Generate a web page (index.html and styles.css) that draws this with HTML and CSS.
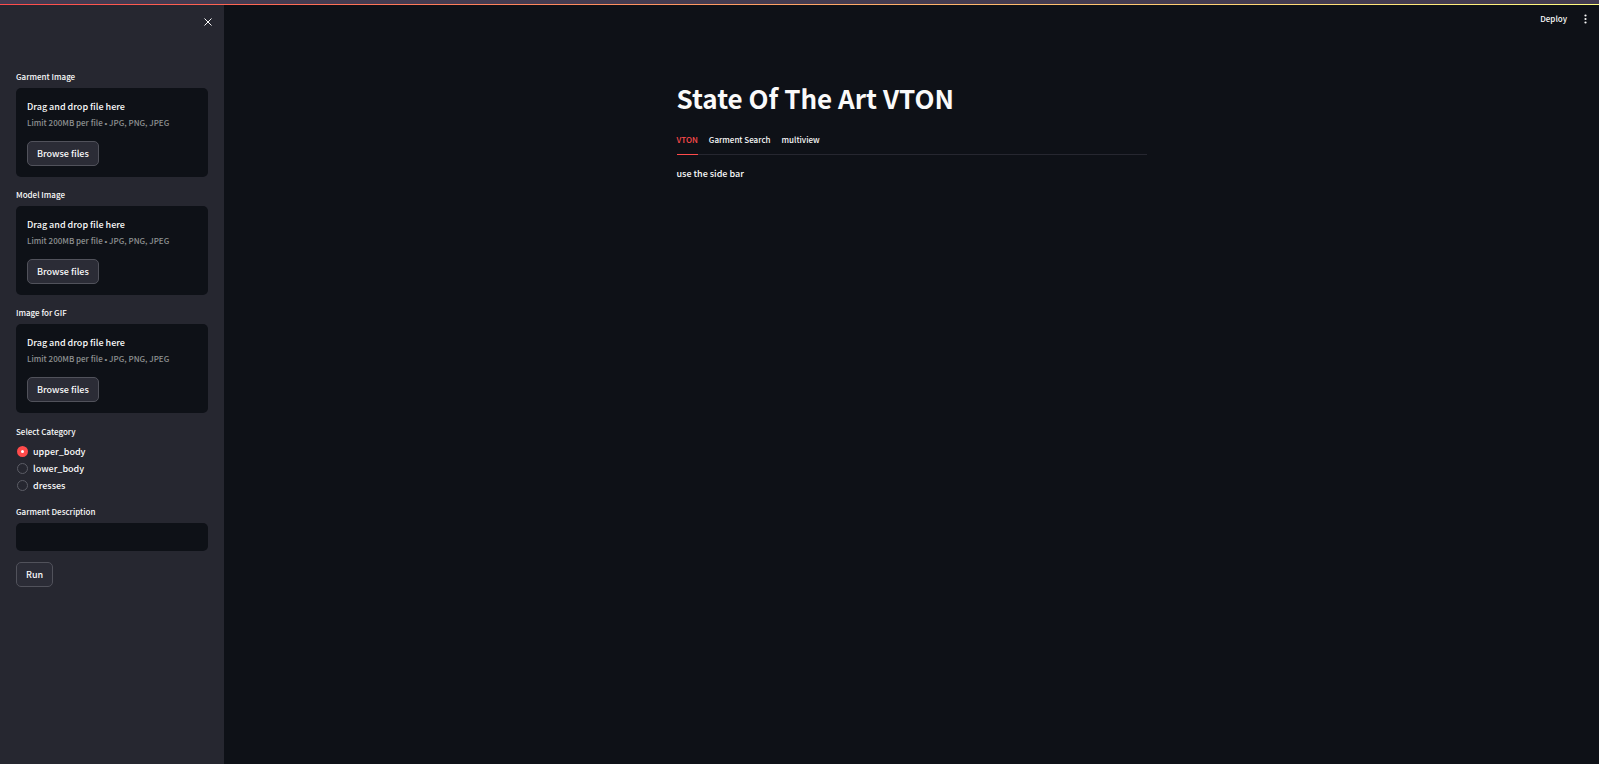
FILE: index.html
```html
<!DOCTYPE html>
<html lang="en">
<head>
<meta charset="utf-8">
<meta name="viewport" content="width=device-width, initial-scale=1">
<title>State Of The Art VTON</title>
<link rel="stylesheet" href="styles.css">
</head>
<body>
<div class="strip"></div>
<div class="rainbow"></div>
<div class="app">
  <aside class="sidebar">
    <div class="sidebar-head">
      <button class="close" type="button" aria-label="Close sidebar">
        <svg class="close-icon" viewBox="0 0 8 8" aria-hidden="true"><path d="M.5.5l7 7M7.5.5l-7 7"/></svg>
      </button>
    </div>
    <form class="controls">
      <section class="field">
        <label class="label" for="garment">Garment Image</label>
        <div class="dropzone">
          <div class="drop-title">Drag and drop file here</div>
          <div class="drop-hint">Limit 200MB per file <span class="bullet">•</span> JPG, PNG, JPEG</div>
          <button class="button" id="garment" type="button">Browse files</button>
        </div>
      </section>
      <section class="field">
        <label class="label" for="model">Model Image</label>
        <div class="dropzone">
          <div class="drop-title">Drag and drop file here</div>
          <div class="drop-hint">Limit 200MB per file <span class="bullet">•</span> JPG, PNG, JPEG</div>
          <button class="button" id="model" type="button">Browse files</button>
        </div>
      </section>
      <section class="field">
        <label class="label" for="gif">Image for GIF</label>
        <div class="dropzone">
          <div class="drop-title">Drag and drop file here</div>
          <div class="drop-hint">Limit 200MB per file <span class="bullet">•</span> JPG, PNG, JPEG</div>
          <button class="button" id="gif" type="button">Browse files</button>
        </div>
      </section>
      <section class="field category" role="radiogroup" aria-labelledby="category">
        <div class="label" id="category">Select Category</div>
        <div class="options">
          <label class="option"><input class="radio" type="radio" name="category" checked>upper_body</label>
          <label class="option"><input class="radio" type="radio" name="category">lower_body</label>
          <label class="option"><input class="radio" type="radio" name="category">dresses</label>
        </div>
      </section>
      <section class="field">
        <label class="label" for="description">Garment Description</label>
        <input class="text-input" id="description" type="text">
      </section>
      <button class="button run" type="button">Run</button>
    </form>
  </aside>
  <div class="page">
    <header class="toolbar">
      <button class="deploy" type="button">Deploy</button>
      <button class="menu" type="button" aria-label="Main menu">
        <svg class="menu-icon" viewBox="0 0 3 10" aria-hidden="true"><circle cx="1.5" cy="1.5" r="1.1"/><circle cx="1.5" cy="5" r="1.1"/><circle cx="1.5" cy="8.5" r="1.1"/></svg>
      </button>
    </header>
    <main class="content">
      <h1 class="title">State Of The Art VTON</h1>
      <div class="tabs" role="tablist">
        <button class="tab tab-active" type="button" role="tab" aria-selected="true">VTON</button>
        <button class="tab" type="button" role="tab" aria-selected="false">Garment Search</button>
        <button class="tab" type="button" role="tab" aria-selected="false">multiview</button>
      </div>
      <p class="text">use the side bar</p>
    </main>
  </div>
</div>
</body>
</html>
```

FILE: styles.css
```css
* {
  box-sizing: border-box;
}

body {
  margin: 0;
  min-height: 100vh;
  display: flex;
  flex-direction: column;
  background: #0e1117;
  color: #fafafa;
  font: 500 9px/16px "Noto Sans CJK SC", "Noto Sans", sans-serif;
}

button,
input {
  margin: 0;
  font: inherit;
  color: inherit;
}

button {
  padding: 0;
  border: 0;
  background: none;
}

.strip {
  height: 4px;
  background: #433b50;
}

.rainbow {
  height: 1px;
  background: linear-gradient(to right, #ff4b4b, #fffd80);
}

.app {
  flex: 1;
  display: flex;
}

.sidebar {
  width: 224px;
  padding: 0 16px;
  background: #262730;
}

.sidebar-head {
  height: 65px;
  padding: 9px 0;
  display: flex;
  justify-content: flex-end;
  align-items: flex-start;
}

.close {
  width: 16px;
  height: 16px;
  margin-right: -8px;
  display: grid;
  place-items: center;
}

.close-icon {
  width: 8px;
  height: 8px;
  fill: none;
  stroke: #fafafa;
}

.controls {
  display: flex;
  flex-direction: column;
  gap: 11px;
}

.field {
  display: flex;
  flex-direction: column;
  gap: 4px;
}

.category {
  padding-top: 1px;
}

.label,
.drop-hint,
.deploy,
.tab {
  font-size: 8px;
}

.label {
  line-height: 14px;
}

.dropzone {
  padding: 11px;
  border-radius: 5px;
  background: #0e1117;
}

.drop-hint {
  height: 16px;
  margin-bottom: 10px;
  color: #8f9193;
}

.bullet {
  font-family: "Liberation Sans", sans-serif;
}

.button {
  display: block;
  height: 25px;
  padding: 0 9px;
  border: 1px solid #51525b;
  border-radius: 5px;
  background: #2b2c36;
}

.run {
  align-self: flex-start;
}

.option {
  height: 17px;
  padding-left: 1px;
  display: flex;
  align-items: center;
  gap: 5px;
}

.radio {
  appearance: none;
  width: 11px;
  height: 11px;
  border: 1px solid #5c5d66;
  border-radius: 50%;
}

.radio:checked {
  border: 4px solid #ff4b4b;
  background: #fff;
}

.text-input {
  width: 100%;
  height: 28px;
  padding: 0 8px;
  border: 0;
  border-radius: 5px;
  background: #0e1117;
}

.page {
  flex: 1;
}

.toolbar {
  height: 28px;
  padding: 0 12px;
  display: flex;
  justify-content: flex-end;
  align-items: center;
  gap: 17px;
}

.menu {
  display: flex;
}

.menu-icon {
  width: 3px;
  height: 10px;
  fill: #fafafa;
}

.content {
  max-width: 470px;
  margin: 0 auto;
  padding-top: 47px;
}

.title {
  margin: 0 0 11px;
  font-size: 26px;
  line-height: 36px;
  font-weight: 700;
}

.tabs {
  display: flex;
  gap: 11px;
  border-bottom: 1px solid #262730;
}

.tab {
  height: 28px;
  padding-bottom: 2px;
  margin-bottom: -1px;
  border-bottom: 1px solid transparent;
}

.tab-active {
  border-color: #ff4b4b;
  color: #ff4b4b;
}

.text {
  margin: 11px 0;
}
```
